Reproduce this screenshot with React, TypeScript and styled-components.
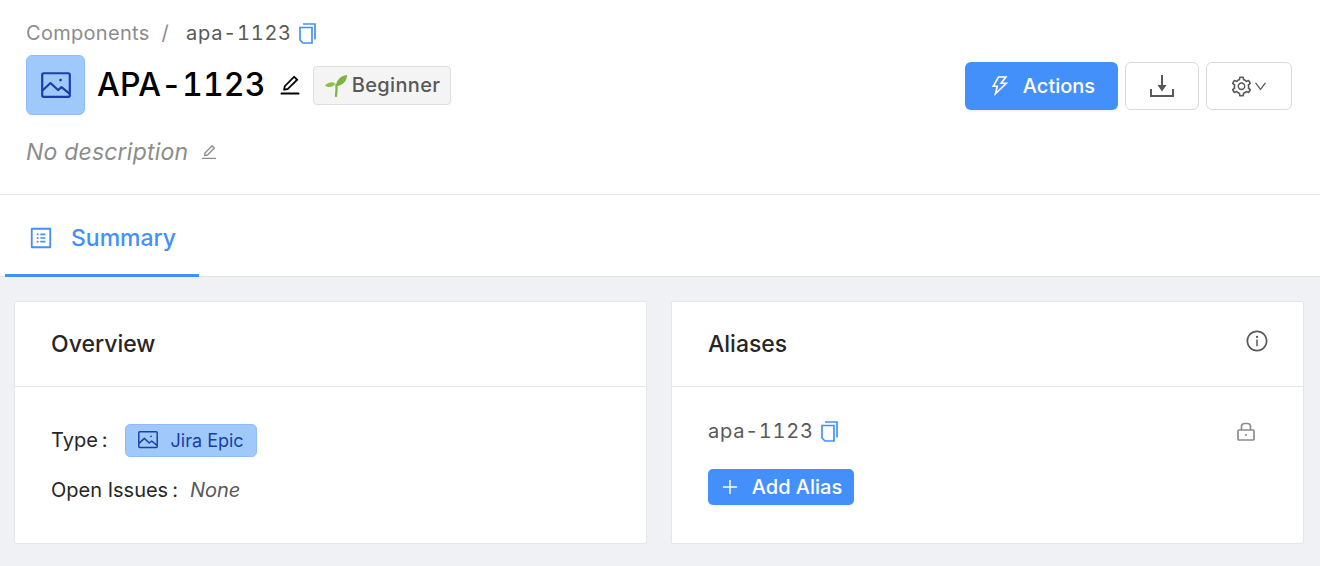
import React from "react"
import styled, { createGlobalStyle } from "styled-components"
import {
  AiOutlineDown,
  AiOutlineEdit,
  AiOutlineInfoCircle,
  AiOutlinePlus,
  AiOutlineProfile,
  AiOutlineSetting,
  AiOutlineThunderbolt,
} from "react-icons/ai"

const GlobalStyle = createGlobalStyle`
  html, body {
    margin: 0;
    padding: 0;
    background: #f0f1f5;
    font-family: Inter, "Liberation Sans", sans-serif;
  }
  * { box-sizing: border-box; }
`

const Page = styled.div`
  width: 1320px;
  height: 566px;
  overflow: hidden;
  display: flex;
  flex-direction: column;
`

const Header = styled.header`
  height: 195px;
  background: #fff;
  border-bottom: 1px solid #e6e6e6;
  padding: 20px 28px 0 26px;
  display: flex;
  flex-direction: column;
`

const Breadcrumb = styled.div`
  display: flex;
  align-items: center;
  height: 26px;
  font-size: 20px;
  line-height: 26px;
  letter-spacing: 0.3px;
  color: #8c8c8c;
`

const Separator = styled.span`
  margin: 0 17px 0 12px;
`

const Slug = styled.span`
  font-variant-numeric: tabular-nums;
  letter-spacing: 0.75px;
  color: #595959;
`

const CopyButton = styled.span`
  display: inline-flex;
  margin-left: 7px;
  color: #4490fa;
`

const TitleRow = styled.div`
  display: flex;
  align-items: center;
  justify-content: space-between;
  margin-top: 9px;
  height: 60px;
`

const TitleGroup = styled.div`
  display: flex;
  align-items: center;
`

const TypeAvatar = styled.div`
  width: 59px;
  height: 60px;
  border-radius: 6px;
  background: #9fc9fb;
  border: 1px solid #8dbcf9;
  color: #1a3fa8;
  display: flex;
  align-items: center;
  justify-content: center;
`

const Title = styled.h1`
  margin: 0 0 0 12px;
  font-size: 32px;
  line-height: 40px;
  font-weight: 500;
  font-variant-numeric: tabular-nums;
  letter-spacing: 0.2px;
  color: #000;
`

const TitleEdit = styled.span`
  display: inline-flex;
  margin: 0 11px 0 12px;
  color: #000;
`

const LevelTag = styled.div`
  display: flex;
  align-items: center;
  height: 39px;
  padding: 0 10px;
  border: 1px solid #dedede;
  border-radius: 4px;
  background: #f4f4f4;
  font-size: 20px;
  font-weight: 500;
  letter-spacing: 0.35px;
  color: #595959;
  gap: 4px;
`

const Actions = styled.div`
  display: flex;
  align-items: center;
  gap: 7px;
  margin-top: 2px;
`

const PrimaryButton = styled.button`
  display: flex;
  align-items: center;
  justify-content: center;
  width: 153px;
  height: 48px;
  gap: 11px;
  border: none;
  border-radius: 6px;
  background: #4490fa;
  color: #fff;
  font: 500 20px Inter, sans-serif;
  box-shadow: 0 2px 0 rgba(0, 0, 0, 0.04);
`

const GhostButton = styled.button<{ $width: number }>`
  display: flex;
  align-items: center;
  justify-content: center;
  width: ${p => p.$width}px;
  height: 48px;
  border: 1px solid #d9d9d9;
  border-radius: 6px;
  background: #fff;
  color: #595959;
  padding: 0;
`

const Description = styled.div`
  display: flex;
  align-items: center;
  margin-top: 21px;
  height: 32px;
  font-size: 23px;
  letter-spacing: 0.2px;
  font-style: italic;
  color: #8c8c8c;
  gap: 12px;
`

const DescriptionEdit = styled.span`
  display: inline-flex;
  font-style: normal;
`

const TabBar = styled.nav`
  height: 82px;
  background: #fff;
  border-bottom: 1px solid #e3e3e3;
  padding-left: 5px;
  display: flex;
`

const Tab = styled.div`
  width: 194px;
  height: 82px;
  padding: 6px 0 0 23px;
  display: flex;
  align-items: center;
  gap: 17px;
  border-bottom: 3px solid #4490fa;
  color: #4490fa;
  font-size: 23px;
  font-weight: 500;
`

const Content = styled.main`
  display: grid;
  grid-template-columns: 633px 633px;
  gap: 24px;
  padding: 24px 16px 0 14px;
`

const Card = styled.section`
  height: 243px;
  background: #fff;
  border: 1px solid #e6e6e6;
  border-radius: 2px;
`

const CardHead = styled.div`
  height: 85px;
  padding: 0 36px;
  border-bottom: 1px solid #e6e6e6;
  display: flex;
  align-items: center;
  justify-content: space-between;
`

const CardTitle = styled.h2`
  margin: 0;
  font-size: 23px;
  font-weight: 500;
  color: #262626;
`

const InfoIcon = styled.span`
  display: inline-flex;
  color: #595959;
  margin: -6px -2px 0 0;
`

const CardBody = styled.div`
  padding: 36px 36px 0;
`

const Field = styled.div<{ $gap?: number }>`
  display: flex;
  align-items: center;
  height: 34px;
  font-size: 20px;
  color: #262626;
  margin-bottom: ${p => p.$gap ?? 0}px;
`

const FieldLabel = styled.span`
  margin-right: 12px;
`

const Colon = styled.span`
  margin-left: 4px;
`

const EmptyValue = styled.em`
  color: #595959;
`

const TypeTag = styled.div`
  display: flex;
  align-items: center;
  height: 33px;
  margin-left: 5px;
  padding: 0 12px;
  gap: 13px;
  border: 1px solid #8dbcf9;
  border-radius: 5px;
  background: #9fc9fb;
  color: #1a3fa8;
  font-size: 18px;
`

const AliasRow = styled.div`
  display: flex;
  align-items: center;
  justify-content: space-between;
  height: 30px;
  margin-top: -7px;
  padding-right: 12px;
  font-size: 20px;
  color: #595959;
`

const AliasName = styled.div`
  display: flex;
  align-items: center;
`

const LockIcon = styled.span`
  display: inline-flex;
  color: #8c8c8c;
`

const AddButton = styled.button`
  margin-top: 23px;
  display: flex;
  align-items: center;
  justify-content: center;
  width: 146px;
  height: 36px;
  gap: 12px;
  border: none;
  border-radius: 5px;
  background: #4490fa;
  color: #fff;
  font: 500 20px Inter, sans-serif;
  box-shadow: 0 2px 0 rgba(0, 0, 0, 0.04);
`

const CopyIcon = () => (
  <svg width="17" height="21" viewBox="0 0 17 21" fill="none" stroke="currentColor" strokeWidth="1.7">
    <path d="M4 1h12v15.500" />
    <path d="M1 4.500h12v15.500H4l-3-3z" />
  </svg>
)

const PictureIcon = ({ size }: { size: number }) => (
  <svg width={size} height={size * 0.87} viewBox="0 0 30 26" fill="none" stroke="currentColor" strokeWidth="2.2" strokeLinejoin="round">
    <rect x="1.200" y="1.200" width="27.600" height="23.600" rx="1.500" />
    <path d="M1.500 18.500 9.500 11l7.500 7 3.500-3 8 6.500" />
    <circle cx="19.500" cy="8" r="1.400" fill="currentColor" stroke="none" />
  </svg>
)

const SeedlingIcon = () => (
  <svg width="24" height="24" viewBox="0 0 24 24">
    <path d="M12 23c.4-4 .6-8 .4-11" fill="none" stroke="#7cb342" strokeWidth="2.200" strokeLinecap="round" />
    <path d="M12 13C12.500 7 16 3 23 2c0 6-4 10.500-11 11z" fill="#7cb342" />
    <path d="M11.500 11C9 8.500 5 8.500 1 12.500c3.500 2.500 7.500 2 10.500-1.500z" fill="#8bc34a" />
  </svg>
)

const DownloadIcon = () => (
  <svg width="24" height="22" viewBox="0 0 24 22" fill="none" stroke="currentColor" strokeWidth="2">
    <path d="M12 0v14" />
    <path d="M12 16.500 7.500 10h9z" fill="currentColor" stroke="none" />
    <path d="M1 14v7h22v-7" />
  </svg>
)

const PadlockIcon = () => (
  <svg width="18" height="19" viewBox="0 0 18 19" fill="none" stroke="currentColor" strokeWidth="1.700">
    <rect x="1" y="8" width="16" height="10" rx="1" />
    <path d="M4.500 8V4.500a3 3 0 0 1 3-3h3a3 3 0 0 1 3 3V8" />
    <circle cx="9" cy="13" r="1.100" fill="currentColor" stroke="none" />
  </svg>
)

export default function App() {
  return (
    <Page>
      <GlobalStyle />
      <Header>
        <Breadcrumb>
          Components
          <Separator>/</Separator>
          <Slug>apa-1123</Slug>
          <CopyButton><CopyIcon /></CopyButton>
        </Breadcrumb>
        <TitleRow>
          <TitleGroup>
            <TypeAvatar><PictureIcon size={30} /></TypeAvatar>
            <Title>APA-1123</Title>
            <TitleEdit><AiOutlineEdit size={24} /></TitleEdit>
            <LevelTag><SeedlingIcon />Beginner</LevelTag>
          </TitleGroup>
          <Actions>
            <PrimaryButton><AiOutlineThunderbolt size={24} />Actions</PrimaryButton>
            <GhostButton $width={74}><DownloadIcon /></GhostButton>
            <GhostButton $width={86}>
              <AiOutlineSetting size={23} />
              <AiOutlineDown size={15} />
            </GhostButton>
          </Actions>
        </TitleRow>
        <Description>
          No description
          <DescriptionEdit><AiOutlineEdit size={18} /></DescriptionEdit>
        </Description>
      </Header>
      <TabBar>
        <Tab><AiOutlineProfile size={26} />Summary</Tab>
      </TabBar>
      <Content>
        <Card>
          <CardHead><CardTitle>Overview</CardTitle></CardHead>
          <CardBody>
            <Field $gap={16}>
              <FieldLabel>Type<Colon>:</Colon></FieldLabel>
              <TypeTag><PictureIcon size={20} />Jira Epic</TypeTag>
            </Field>
            <Field>
              <FieldLabel>Open Issues<Colon>:</Colon></FieldLabel>
              <EmptyValue>None</EmptyValue>
            </Field>
          </CardBody>
        </Card>
        <Card>
          <CardHead>
            <CardTitle>Aliases</CardTitle>
            <InfoIcon><AiOutlineInfoCircle size={24} /></InfoIcon>
          </CardHead>
          <CardBody>
            <AliasRow>
              <AliasName><Slug>apa-1123</Slug><CopyButton><CopyIcon /></CopyButton></AliasName>
              <LockIcon><PadlockIcon /></LockIcon>
            </AliasRow>
            <AddButton><AiOutlinePlus size={20} />Add Alias</AddButton>
          </CardBody>
        </Card>
      </Content>
    </Page>
  )
}
